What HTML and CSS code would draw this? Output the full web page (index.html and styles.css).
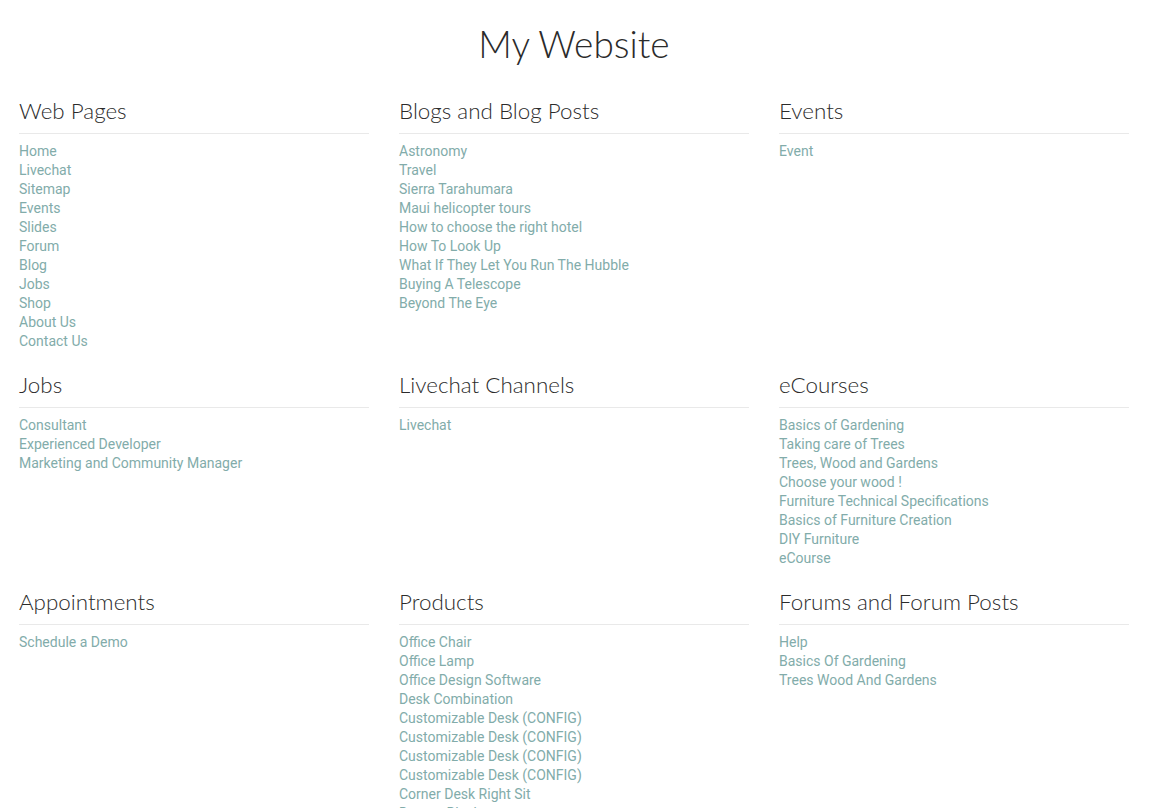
FILE: index.html
```html
<!DOCTYPE html>
<html lang="en">
<head>
<meta charset="utf-8">
<title>My Website</title>
<link rel="stylesheet" href="styles.css">
</head>
<body>
<div class="page">
  <h1 class="site-title">My Website</h1>
  <div class="sections">
    <section class="group">
      <h3 class="group-title">Web Pages</h3>
      <ul class="links">
        <li><a href="#">Home</a></li>
        <li><a href="#">Livechat</a></li>
        <li><a href="#">Sitemap</a></li>
        <li><a href="#">Events</a></li>
        <li><a href="#">Slides</a></li>
        <li><a href="#">Forum</a></li>
        <li><a href="#">Blog</a></li>
        <li><a href="#">Jobs</a></li>
        <li><a href="#">Shop</a></li>
        <li><a href="#">About Us</a></li>
        <li><a href="#">Contact Us</a></li>
      </ul>
    </section>
    <section class="group">
      <h3 class="group-title">Blogs and Blog Posts</h3>
      <ul class="links">
        <li><a href="#">Astronomy</a></li>
        <li><a href="#">Travel</a></li>
        <li><a href="#">Sierra Tarahumara</a></li>
        <li><a href="#">Maui helicopter tours</a></li>
        <li><a href="#">How to choose the right hotel</a></li>
        <li><a href="#">How To Look Up</a></li>
        <li><a href="#">What If They Let You Run The Hubble</a></li>
        <li><a href="#">Buying A Telescope</a></li>
        <li><a href="#">Beyond The Eye</a></li>
      </ul>
    </section>
    <section class="group">
      <h3 class="group-title">Events</h3>
      <ul class="links">
        <li><a href="#">Event</a></li>
      </ul>
    </section>
    <section class="group">
      <h3 class="group-title">Jobs</h3>
      <ul class="links">
        <li><a href="#">Consultant</a></li>
        <li><a href="#">Experienced Developer</a></li>
        <li><a href="#">Marketing and Community Manager</a></li>
      </ul>
    </section>
    <section class="group">
      <h3 class="group-title">Livechat Channels</h3>
      <ul class="links">
        <li><a href="#">Livechat</a></li>
      </ul>
    </section>
    <section class="group">
      <h3 class="group-title">eCourses</h3>
      <ul class="links">
        <li><a href="#">Basics of Gardening</a></li>
        <li><a href="#">Taking care of Trees</a></li>
        <li><a href="#">Trees, Wood and Gardens</a></li>
        <li><a href="#">Choose your wood !</a></li>
        <li><a href="#">Furniture Technical Specifications</a></li>
        <li><a href="#">Basics of Furniture Creation</a></li>
        <li><a href="#">DIY Furniture</a></li>
        <li><a href="#">eCourse</a></li>
      </ul>
    </section>
    <section class="group">
      <h3 class="group-title">Appointments</h3>
      <ul class="links">
        <li><a href="#">Schedule a Demo</a></li>
      </ul>
    </section>
    <section class="group">
      <h3 class="group-title">Products</h3>
      <ul class="links">
        <li><a href="#">Office Chair</a></li>
        <li><a href="#">Office Lamp</a></li>
        <li><a href="#">Office Design Software</a></li>
        <li><a href="#">Desk Combination</a></li>
        <li><a href="#">Customizable Desk (CONFIG)</a></li>
        <li><a href="#">Customizable Desk (CONFIG)</a></li>
        <li><a href="#">Customizable Desk (CONFIG)</a></li>
        <li><a href="#">Customizable Desk (CONFIG)</a></li>
        <li><a href="#">Corner Desk Right Sit</a></li>
        <li><a href="#">Drawer Black</a></li>
      </ul>
    </section>
    <section class="group">
      <h3 class="group-title">Forums and Forum Posts</h3>
      <ul class="links">
        <li><a href="#">Help</a></li>
        <li><a href="#">Basics Of Gardening</a></li>
        <li><a href="#">Trees Wood And Gardens</a></li>
      </ul>
    </section>
  </div>
</div>
</body>
</html>
```

FILE: styles.css
```css
html, body {
  margin: 0;
  padding: 0;
  background: #ffffff;
}

.page {
  width: 1110px;
  margin: 0 0 0 19px;
  padding-top: 20px;
}

.site-title {
  margin: 0 0 28px 0;
  text-align: center;
  font-family: "Lato", "Open Sans", sans-serif;
  font-weight: 300;
  font-size: 37px;
  line-height: 48px;
  color: #2b2b2b;
}

.sections {
  display: grid;
  grid-template-columns: 350px 350px 350px;
  column-gap: 30px;
  row-gap: 19px;
}

.group-title {
  margin: 0 0 8px 0;
  padding-top: 1px;
  padding-bottom: 8px;
  border-bottom: 1px solid #e9e9e9;
  font-family: "Lato", "Open Sans", sans-serif;
  font-weight: 300;
  font-size: 22.4px;
  line-height: 28px;
  color: #2b2b2b;
}

.links {
  list-style: none;
  margin: 0;
  padding: 0;
}

.links li {
  font-family: Roboto, "Liberation Sans", sans-serif;
  font-size: 14px;
  line-height: 19px;
}

.links a {
  color: #82acaa;
  text-decoration: none;
}
```
